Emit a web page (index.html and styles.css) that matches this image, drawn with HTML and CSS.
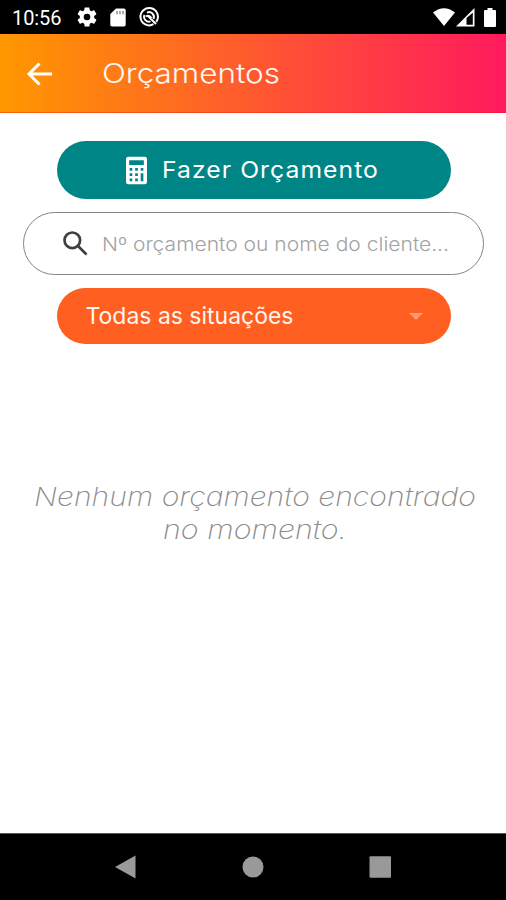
FILE: index.html
```html
<!DOCTYPE html>
<html lang="pt-BR">
<head>
<meta charset="utf-8">
<title>Orçamentos</title>
<link rel="stylesheet" href="styles.css">
</head>
<body>
<div class="status">
  <span class="clock">10:56</span>
  <svg class="gear" viewBox="2 2 20 20"><path fill-rule="evenodd" d="M19.14 12.94c.04-.3.06-.61.06-.94s-.02-.64-.07-.94l2.03-1.58a.5.5 0 0 0 .12-.61l-1.92-3.32a.5.5 0 0 0-.59-.22l-2.39.96a7 7 0 0 0-1.62-.94L14.4 2.8a.5.5 0 0 0-.48-.4h-3.84a.5.5 0 0 0-.47.4l-.36 2.55c-.59.24-1.13.57-1.62.94l-2.39-.96a.5.5 0 0 0-.59.22L2.74 8.87a.5.5 0 0 0 .12.61l2.03 1.58a6 6 0 0 0 0 1.88l-2.03 1.58a.5.5 0 0 0-.12.61l1.92 3.32c.12.22.37.29.59.22l2.39-.96c.5.38 1.03.7 1.62.94l.36 2.55c.05.24.24.4.48.4h3.84c.24 0 .44-.17.47-.4l.36-2.55a7 7 0 0 0 1.62-.94l2.39.96c.22.08.47 0 .59-.22l1.92-3.32a.5.5 0 0 0-.12-.61zM12 15.3a3.3 3.3 0 1 1 0-6.6 3.3 3.3 0 0 1 0 6.6z"/></svg>
  <svg class="card" viewBox="0 0 16 19"><path d="M6 .5h8a1.7 1.7 0 0 1 1.7 1.7v14.6A1.7 1.7 0 0 1 14 18.5H2a1.7 1.7 0 0 1-1.7-1.7V6z"/><path class="slots" d="M7 3v3.2M10 3v3.2M13 3v3.2"/></svg>
  <svg class="round" viewBox="0 0 20 20"><path d="M14.5 17.2A8.7 8.7 0 1 1 17.200 14.800M11.500 14.400A4.800 4.800 0 0 1 5.500 8M8 5.600A4.800 4.800 0 0 1 14.500 11.800M7 9.500q3-2 5.500 1.500M8.500 8.500l8.500 8.500"/></svg>
  <span class="grow"></span>
  <svg class="wifi" viewBox="0 0 22 18"><path d="M0 4.5Q11-4 22 4.500L11 18z"/></svg>
  <svg class="signal" viewBox="0 0 19 19"><path fill-rule="evenodd" d="M0 18.500L18.500 0v18.500zM10.500 10v6.800h6.300V4.800z"/></svg>
  <svg class="battery" viewBox="0 0 12 19"><path d="M3.500 0h5v2H11q1 0 1 1v15q0 1-1 1H1q-1 0-1-1V3q0-1 1-1h2.500z"/></svg>
</div>
<header class="bar">
  <svg class="back" viewBox="0 0 26 24"><path d="M25 12H2.500M12.500 1.500L2 12l10.500 10.500"/></svg>
  <svg class="title" viewBox="0 0 180 40"><text x="0" y="26.500" textLength="178" lengthAdjust="spacingAndGlyphs">Orçamentos</text></svg>
</header>
<main>
  <button class="create">
    <svg class="calc" viewBox="0 0 22 29"><path fill-rule="evenodd" d="M2.500 0h17Q22 0 22 2.500v24q0 2.500-2.500 2.500h-17Q0 29 0 26.500v-24Q0 0 2.500 0zM3.300 3.700v5h15.400v-5zM3.800 12v2.800h2.800V12zm5.800 0v2.800h2.800V12zm5.800 0v2.800h2.800V12zM3.800 17.500v2.800h2.800v-2.800zm5.800 0v2.800h2.800v-2.800zm5.800 0v8.300h2.800v-8.300zM3.800 23v2.800h2.800V23zm5.800 0v2.800h2.800V23z"/></svg>
    <svg class="create-text" viewBox="0 0 218 40"><text x="0" y="28" textLength="217" lengthAdjust="spacingAndGlyphs">Fazer Orçamento</text></svg>
  </button>
  <div class="search">
    <svg class="lens" viewBox="0 0 25 25"><circle cx="9.300" cy="9.300" r="7.800"/><path d="M15 15l8.500 8.500"/></svg>
    <svg class="hint" viewBox="0 0 350 40"><text x="-1" y="27" textLength="347" lengthAdjust="spacingAndGlyphs">Nº orçamento ou nome do cliente...</text></svg>
  </div>
  <div class="filter">
    <svg class="filter-text" viewBox="0 0 210 40"><text x="0.500" y="28" textLength="208" lengthAdjust="spacingAndGlyphs">Todas as situações</text></svg>
    <svg class="caret" viewBox="0 0 14 7"><path d="M0 0h14L7 7z"/></svg>
  </div>
  <svg class="empty" viewBox="0 0 446 80">
    <text x="4" y="35.500" textLength="442" lengthAdjust="spacingAndGlyphs">Nenhum orçamento encontrado</text>
    <text x="133" y="68.500" textLength="184" lengthAdjust="spacingAndGlyphs">no momento.</text>
  </svg>
</main>
<nav class="nav">
  <svg viewBox="0 0 22 24"><path d="M0 12L20.500 .5v23z"/></svg>
  <svg viewBox="0 0 22 24"><circle cx="11" cy="12" r="10.500"/></svg>
  <svg viewBox="0 0 22 24"><rect x=".5" y="1.200" width="21.500" height="21.500" rx="1"/></svg>
</nav>
</body>
</html>
```
FILE: styles.css
```css
* { box-sizing: border-box; }
body {
  margin: 0;
  width: 506px;
  height: 900px;
  display: flex;
  flex-direction: column;
  background: #fff;
  font-family: Inter, "Open Sans", sans-serif;
  overflow: hidden;
}
svg { display: block; flex: none; overflow: visible; }
.status {
  height: 34px;
  flex: none;
  display: flex;
  align-items: center;
  padding: 0 10px 0 12px;
  background: #000;
  color: #fff;
  fill: #fff;
}
.clock { width: 65px; font: 400 20px/34px Roboto, sans-serif; letter-spacing: -0.1px; padding-top: 2px; }
.gear { width: 20px; height: 20px; }
.card { width: 16px; height: 19px; margin-left: 13px; }
.slots { stroke: #000; stroke-width: 1; opacity: .65; }
.round { width: 20px; height: 20px; margin-left: 13px; fill: none; stroke: #fff; stroke-width: 2; }
.grow { flex: 1; }
.wifi { width: 22px; height: 18px; }
.signal { width: 19px; height: 19px; margin: 0 9px 0 1px; }
.battery { width: 12px; height: 19px; }
.bar {
  height: 79px;
  flex: none;
  display: flex;
  align-items: center;
  padding-left: 27px;
  background: linear-gradient(90deg, #ff9800, #ff1a5e);
  border-bottom: 1px solid rgba(235, 25, 20, .4);
}
.back { width: 26px; height: 24px; margin-top: 1px; fill: none; stroke: #fff; stroke-width: 3; }
.title { width: 180px; height: 40px; margin: 5px 0 0 49px; font-size: 27.5px; font-weight: 300; fill: #fff7f2; }
main {
  flex: 1;
  display: flex;
  flex-direction: column;
  align-items: center;
  padding-top: 28px;
}
.create {
  width: 394px;
  height: 58px;
  flex: none;
  display: flex;
  align-items: center;
  padding: 0 0 0 69px;
  margin-left: 1px;
  border: 0;
  border-radius: 29px;
  background: #008587;
  font-family: inherit;
  fill: #fff;
}
.calc { width: 21px; height: 29px; }
.create-text { width: 218px; height: 40px; margin-left: 15px; font-size: 23px; font-weight: 400; letter-spacing: 1px; }
.search {
  width: 461px;
  height: 63px;
  flex: none;
  display: flex;
  align-items: center;
  margin-top: 13px;
  padding-left: 39px;
  border: 1px solid #858585;
  border-radius: 32px;
}
.lens { width: 25px; height: 25px; fill: none; stroke: #3f3f3f; stroke-width: 2.7; }
.hint { width: 350px; height: 40px; margin-left: 15px; font-size: 19px; font-weight: 300; fill: #a3a3a3; }
.filter {
  width: 394px;
  height: 56px;
  flex: none;
  display: flex;
  align-items: center;
  justify-content: space-between;
  margin: 13px 0 0 1px;
  padding: 0 28px;
  border-radius: 28px;
  background: #ff5f20;
}
.filter-text { width: 210px; height: 40px; font-size: 23px; fill: #fff5f0; }
.caret { width: 14px; height: 7px; fill: #ff9c75; }
.empty { width: 446px; height: 80px; margin-top: 126px; font-size: 26px; font-style: italic; font-weight: 200; fill: #8c8c8c; }
.nav {
  height: 67px;
  flex: none;
  display: flex;
  justify-content: space-between;
  align-items: center;
  padding: 0 115px;
  background: #000;
  border-top: 1px solid #555;
  fill: #999;
}
.nav svg { width: 22px; height: 24px; }
```
